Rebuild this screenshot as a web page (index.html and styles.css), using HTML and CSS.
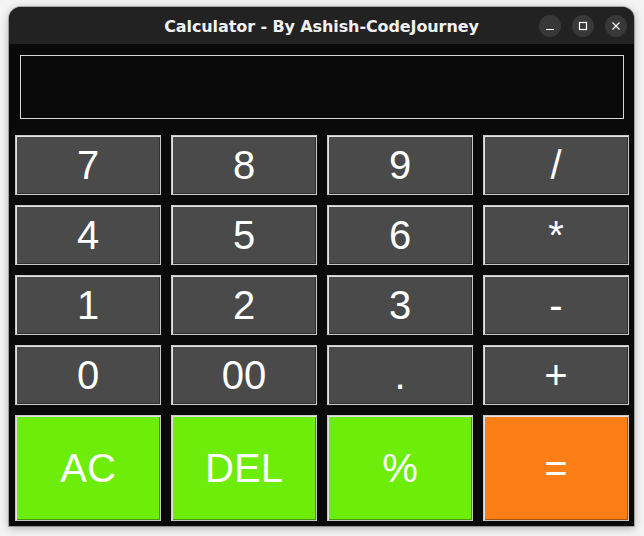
FILE: index.html
```html
<!DOCTYPE html>
<html>
<head>
<meta charset="utf-8">
<link rel="stylesheet" href="styles.css">
</head>
<body>
<div class="window">
  <div class="titlebar">
    <span class="title">Calculator - By Ashish-CodeJourney</span>
    <div class="controls">
      <span class="ctl"><svg width="10" height="10" viewBox="0 0 10 10"><path d="M1 8.5H9" stroke="#fff" stroke-width="1.2"/></svg></span>
      <span class="ctl"><svg width="10" height="10" viewBox="0 0 10 10"><rect x="1.5" y="1.5" width="7" height="7" fill="none" stroke="#fff" stroke-width="1.2"/></svg></span>
      <span class="ctl"><svg width="10" height="10" viewBox="0 0 10 10"><path d="M1.5 1.5L8.5 8.5M8.5 1.5L1.5 8.5" stroke="#fff" stroke-width="1.2"/></svg></span>
    </div>
  </div>
  <div class="body">
    <div class="display"></div>
    <div class="keys">
      <button class="key">7</button>
      <button class="key">8</button>
      <button class="key">9</button>
      <button class="key">/</button>
      <button class="key">4</button>
      <button class="key">5</button>
      <button class="key">6</button>
      <button class="key">*</button>
      <button class="key">1</button>
      <button class="key">2</button>
      <button class="key">3</button>
      <button class="key">-</button>
      <button class="key">0</button>
      <button class="key">00</button>
      <button class="key">.</button>
      <button class="key">+</button>
      <button class="key green">AC</button>
      <button class="key green">DEL</button>
      <button class="key green">%</button>
      <button class="key orange">=</button>
    </div>
  </div>
</div>
</body>
</html>
```
FILE: styles.css
```css
html, body {
  margin: 0;
  padding: 0;
  background: #f4f4f4;
}
body {
  width: 644px;
  height: 536px;
  overflow: hidden;
  padding-top: 7px;
  padding-left: 9px;
  box-sizing: border-box;
}
.window {
  width: 625px;
  height: 519px;
  background: #0a0a0a;
  border-radius: 12px 12px 0 0;
  box-shadow: 0 0 0 1px rgba(0,0,0,0.25), 0 2px 10px rgba(0,0,0,0.3);
  display: flex;
  flex-direction: column;
  overflow: hidden;
}
.titlebar {
  height: 37px;
  flex: none;
  background: #222222;
  position: relative;
  display: flex;
  align-items: center;
  justify-content: center;
}
.title {
  font-family: "DejaVu Sans", sans-serif;
  font-weight: 700;
  font-size: 16px;
  color: #f2f2f2;
  letter-spacing: -0.1px;
  padding-top: 2px;
}
.controls {
  position: absolute;
  right: 7px;
  top: 8px;
  display: flex;
  gap: 11px;
}
.ctl {
  width: 22px;
  height: 22px;
  border-radius: 50%;
  background: #383838;
  display: flex;
  align-items: center;
  justify-content: center;
}
.body {
  padding: 11px 10px 5px 6px;
}
.display {
  margin-left: 5px;
  height: 62px;
  border: 1px solid #d6d6d6;
  background: #0a0a0a;
}
.keys {
  margin-top: 16px;
  display: grid;
  grid-template-columns: repeat(4, 146px);
  grid-template-rows: 60px 60px 60px 60px 106px;
  gap: 10px;
}
.key {
  margin: 0;
  padding: 0;
  border: 1px solid #c8c8c8;
  box-shadow: inset 1px 1px 0 #e2e2e2, inset -1px -1px 0 rgba(0,0,0,0.35);
  background: #4a4a4a;
  color: #ffffff;
  font-family: "Liberation Sans", Arial, sans-serif;
  font-size: 40px;
  line-height: 1;
  display: flex;
  align-items: center;
  justify-content: center;
}
.green {
  background: #6ded0a;
}
.orange {
  background: #fc7e16;
}
```
